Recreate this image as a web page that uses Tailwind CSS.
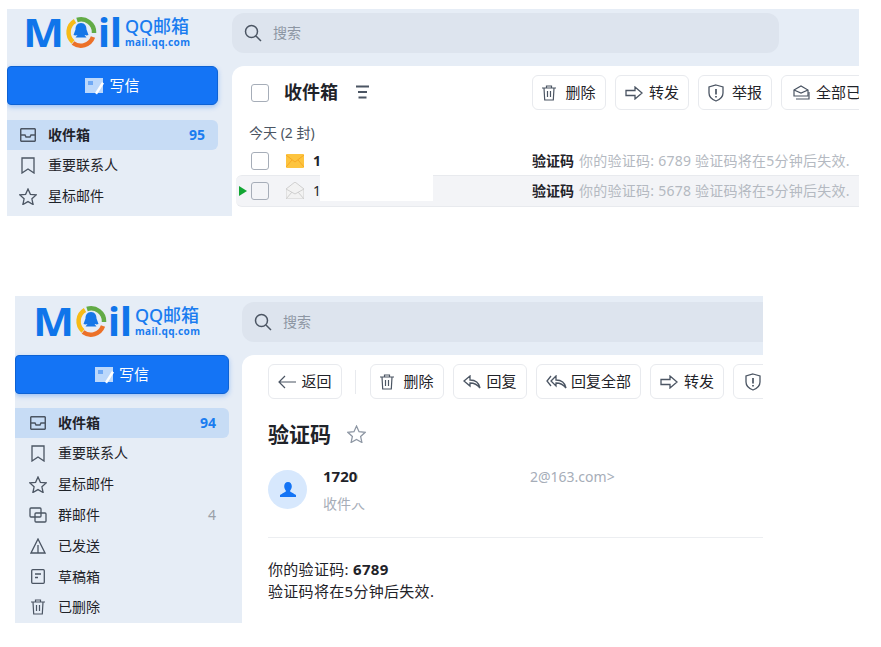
<!DOCTYPE html>
<html lang="zh-CN">
<head>
  <meta charset="UTF-8" />
  <title>QQ邮箱</title>
  <script src="https://cdn.jsdelivr.net/npm/@tailwindcss/browser@4"></script>
</head>
<body class="bg-white w-[881px] h-[647px] overflow-hidden text-[#1f2329] text-sm font-['Noto_Sans','Noto_Sans_CJK_SC',sans-serif]">

  <!-- list view -->
  <div class="ml-[7px] mt-[9px] w-[852px] h-[207px] bg-[#e6edf6] overflow-hidden">
    <div class="h-[57px] flex items-start">
      <div class="w-[225px] h-[57px] shrink-0 pl-[16px] flex items-start">
        <div class="flex items-center text-[#0f75ea] text-[40px] font-bold leading-[46px] h-[46px]">
          <span class="inline-block w-[39px] origin-left scale-x-[1.09]">M</span>
          <svg class="w-[32px] h-[32px] ml-[3px]" viewBox="0 0 32 32" fill="none">
            <path d="M8 26A13 13 0 0 1 10 5" stroke="#f7bb16" stroke-width="4.5"/>
            <path d="M12 4A13 13 0 0 1 29 17" stroke="#62ab46" stroke-width="4.5"/>
            <path d="M28 21A13 13 0 0 1 8 27" stroke="#ec7128" stroke-width="4.5"/>
            <path d="M16 7c4 0 5.500 3 5.500 6.500l2 5.500c-2 1-4 0-4 0l2 2.500H10.500l2-2.500s-2 1-4 0l2-5.500C10.500 10 12 7 16 7z" fill="#1577e8"/>
          </svg>
          <span class="ml-[1px]">il</span>
        </div>
        <div class="ml-[3px] mt-[7px] text-[#1a7cf0]">
          <div class="text-[18px] leading-[20px] font-medium whitespace-nowrap">QQ邮箱</div>
          <div class="text-[10px] leading-[12px] font-bold tracking-[0.4px]">mail.qq.com</div>
        </div>
      </div>
      <div class="mt-[4px] w-[547px] h-[40px] rounded-xl bg-[#dde4ee] flex items-center pl-[12px] text-[#8d96a3]">
        <svg class="w-[18px] h-[18px]" viewBox="0 0 18 18" fill="none" stroke="#4b5563" stroke-width="1.5"><circle cx="7.5" cy="7.5" r="6"/><path d="M12 12l5 5"/></svg>
        <span class="ml-[11px]">搜索</span>
      </div>
    </div>
    <div class="flex h-[150px]">
      <div class="w-[225px] shrink-0">
        <div class="w-[211px] h-[39px] rounded-r-md rounded-l-sm bg-[#1474f5] border border-[#0d62d4] shadow-[0_2px_5px_rgba(20,116,245,0.35)] flex items-center justify-center text-white text-[15px]">
          <svg class="w-[20px] h-[18px] mr-[4px]" viewBox="0 0 20 18"><rect x="0" y="1" width="18" height="15" fill="#bcd8fb"/><rect x="3" y="4" width="5" height="4" fill="#6fa9f5"/><path d="M10 16l7-11 2 1.500-7 11z" fill="#fff"/></svg>
          <span>写信</span>
        </div>
        <div class="mt-[15px] w-[211px]">
          <div class="h-[30px] rounded-r-md bg-[#c7dcf5] flex items-center pl-[13px] pr-[13px] font-bold">
            <svg class="w-[16px] h-[14px] mr-[12px] shrink-0" viewBox="0 0 16 14" fill="none" stroke="#4b5563" stroke-width="1.500"><rect x="0.700" y="0.700" width="14.600" height="12.600" rx="1"/><path d="M1 7h4l1 2h4l1-2h4"/></svg>
            <span>收件箱</span>
            <span class="ml-auto text-[#1a7cf0]">95</span>
          </div>
          <div class="h-[30.8px] flex items-center pl-[13px]">
            <svg class="w-[16px] h-[17px] mr-[12px] shrink-0" viewBox="0 0 16 17" fill="none" stroke="#4b5563" stroke-width="1.300"><path d="M2 1h12v15l-6-4-6 4z"/></svg>
            <span>重要联系人</span>
          </div>
          <div class="h-[30.8px] flex items-center pl-[12px]">
            <svg class="w-[18px] h-[17px] mr-[11px] shrink-0" viewBox="0 0 18 17" fill="none" stroke="#4b5563" stroke-width="1.300"><path d="M9 1l2.400 5.300 5.800.6-4.300 3.900 1.200 5.700L9 13.600l-5.100 2.900 1.200-5.700L.8 6.900l5.800-.6z"/></svg>
            <span>星标邮件</span>
          </div>
        </div>
      </div>
      <div class="relative w-[627px] shrink-0 bg-white rounded-tl-xl overflow-hidden">
        <div class="flex items-center h-[44px] pt-[9px]">
          <div class="w-[300px] shrink-0 flex items-center pl-[19px]">
            <span class="w-[18px] h-[18px] rounded-[3px] border border-[#a6adb8] bg-white"></span>
            <span class="ml-[15px] text-[18px] font-bold leading-none -mt-[2px]">收件箱</span>
            <svg class="ml-[18px] w-[13px] h-[14px] -mt-[1px]" viewBox="0 0 13 14" stroke="#4b5563" stroke-width="2"><path d="M0 1.500h13M2 7h9M2.500 12.500h8"/></svg>
          </div>
          <div class="flex gap-[9px] shrink-0 text-[15px]">
            <div class="w-[74px] h-[35px] rounded-md border border-[#e8eaee] flex items-center justify-center">
              <svg class="w-[14px] h-[16px] mr-[9px]" viewBox="0 0 14 16" fill="none" stroke="#4b5563" stroke-width="1.200"><path d="M0 3h14M4.500 3V1h5v2M2 3l.7 12h8.600L12 3M5.500 6v6M8.500 6v6"/></svg>
              <span>删除</span>
            </div>
            <div class="w-[74px] h-[35px] rounded-md border border-[#e8eaee] flex items-center justify-center">
              <svg class="w-[18px] h-[14px] mr-[6px]" viewBox="0 0 18 14" fill="none" stroke="#4b5563" stroke-width="1.300"><path d="M1 4.500h9V1l7 6-7 6V9.500H1z"/></svg>
              <span>转发</span>
            </div>
            <div class="w-[74px] h-[35px] rounded-md border border-[#e8eaee] flex items-center justify-center">
              <svg class="w-[16px] h-[18px] mr-[8px]" viewBox="0 0 16 18" fill="none" stroke="#4b5563" stroke-width="1.300"><path d="M8 1l7 2v6c0 4-3 6.500-7 8-4-1.500-7-4-7-8V3z"/><path d="M8 5v5.500M8 12v1.500" stroke-width="1.700"/></svg>
              <span>举报</span>
            </div>
            <div class="w-[110px] h-[35px] rounded-md border border-[#e8eaee] flex items-center pl-[11px] whitespace-nowrap">
              <svg class="w-[17px] h-[15px] mr-[6px]" viewBox="0 0 17 15" fill="none" stroke="#4b5563" stroke-width="1.200"><path d="M1 5l7-4 7 4v6H1z"/><path d="M1 5l7 3 7-3M3 14h13V7"/></svg>
              <span>全部已读</span>
            </div>
          </div>
        </div>
        <div class="mt-[10px] h-[26px] pl-[17px] flex items-center text-[14px] text-[#4b5563]">今天 (2 封)</div>
        <div class="flex items-center h-[29px]">
          <div class="w-[300px] shrink-0 flex items-center pl-[19px] font-bold">
            <span class="w-[18px] h-[18px] rounded-[3px] border border-[#a6adb8] bg-white"></span>
            <svg class="ml-[17px] w-[18px] h-[14px]" viewBox="0 0 18 14"><rect width="18" height="14" rx="1" fill="#fdc43f"/><path d="M0 1l9 7 9-7M0 13l6-7M18 13l-6-7" fill="none" stroke="#f7a823"/></svg>
            <span class="ml-[9px]">1</span>
          </div>
          <span class="font-bold">验证码</span>
          <span class="ml-[5px] text-[#b4b9c1] whitespace-nowrap tracking-[0.25px]">你的验证码: 6789 验证码将在5分钟后失效.</span>
        </div>
        <div class="flex items-center h-[32px] pb-[1px] ml-[4px] bg-[#f3f4f7] border-y border-[#e8eaee] rounded-l-md">
          <div class="w-[296px] shrink-0 flex items-center pl-[3px]">
            <span class="w-0 h-0 border-y-[5px] border-y-transparent border-l-[8px] border-l-[#12a633]"></span>
            <span class="ml-[4px] w-[18px] h-[18px] rounded-[3px] border border-[#a6adb8]"></span>
            <svg class="ml-[17px] w-[18px] h-[17px]" viewBox="0 0 18 17"><path d="M0 7l9-7 9 7v10H0z" fill="#f2f2f2" stroke="#cfcfcf"/><path d="M0 7l9 5 9-5M0 17l6-7M18 17l-6-7" fill="none" stroke="#cfcfcf"/></svg>
            <span class="ml-[9px]">1</span>
          </div>
          <span class="font-bold">验证码</span>
          <span class="ml-[5px] text-[#b4b9c1] whitespace-nowrap tracking-[0.25px]">你的验证码: 5678 验证码将在5分钟后失效.</span>
        </div>
        <div class="absolute left-[88px] top-[109px] w-[113px] h-[26px] bg-white"></div>
      </div>
    </div>
  </div>

  <!-- reading view -->
  <div class="ml-[15px] mt-[80px] w-[748px] h-[327px] bg-[#e6edf6] overflow-hidden">
    <div class="h-[59px] flex items-start">
      <div class="w-[227px] h-[59px] shrink-0 pl-[18px] pt-[2px] flex items-start">
        <div class="flex items-center text-[#0f75ea] text-[40px] font-bold leading-[46px] h-[46px]">
          <span class="inline-block w-[39px] origin-left scale-x-[1.09]">M</span>
          <svg class="w-[32px] h-[32px] ml-[3px]" viewBox="0 0 32 32" fill="none">
            <path d="M8 26A13 13 0 0 1 10 5" stroke="#f7bb16" stroke-width="4.5"/>
            <path d="M12 4A13 13 0 0 1 29 17" stroke="#62ab46" stroke-width="4.5"/>
            <path d="M28 21A13 13 0 0 1 8 27" stroke="#ec7128" stroke-width="4.5"/>
            <path d="M16 7c4 0 5.500 3 5.500 6.500l2 5.500c-2 1-4 0-4 0l2 2.500H10.500l2-2.500s-2 1-4 0l2-5.500C10.500 10 12 7 16 7z" fill="#1577e8"/>
          </svg>
          <span class="ml-[1px]">il</span>
        </div>
        <div class="ml-[3px] mt-[7px] text-[#1a7cf0]">
          <div class="text-[18px] leading-[20px] font-medium whitespace-nowrap">QQ邮箱</div>
          <div class="text-[10px] leading-[12px] font-bold tracking-[0.4px]">mail.qq.com</div>
        </div>
      </div>
      <div class="mt-[6px] w-[547px] h-[40px] rounded-xl bg-[#dde4ee] flex items-center pl-[12px] text-[#8d96a3] shrink-0">
        <svg class="w-[18px] h-[18px]" viewBox="0 0 18 18" fill="none" stroke="#4b5563" stroke-width="1.5"><circle cx="7.5" cy="7.5" r="6"/><path d="M12 12l5 5"/></svg>
        <span class="ml-[11px]">搜索</span>
      </div>
    </div>
    <div class="flex h-[268px]">
      <div class="w-[227px] shrink-0">
        <div class="w-[214px] h-[39px] rounded-r-md rounded-l-sm bg-[#1474f5] border border-[#0d62d4] shadow-[0_2px_5px_rgba(20,116,245,0.35)] flex items-center justify-center text-white text-[15px]">
          <svg class="w-[20px] h-[18px] mr-[4px]" viewBox="0 0 20 18"><rect x="0" y="1" width="18" height="15" fill="#bcd8fb"/><rect x="3" y="4" width="5" height="4" fill="#6fa9f5"/><path d="M10 16l7-11 2 1.500-7 11z" fill="#fff"/></svg>
          <span>写信</span>
        </div>
        <div class="mt-[14px] w-[214px]">
          <div class="h-[30px] rounded-r-md bg-[#c7dcf5] flex items-center pl-[15px] pr-[13px] font-bold">
            <svg class="w-[16px] h-[14px] mr-[12px] shrink-0" viewBox="0 0 16 14" fill="none" stroke="#4b5563" stroke-width="1.500"><rect x="0.700" y="0.700" width="14.600" height="12.600" rx="1"/><path d="M1 7h4l1 2h4l1-2h4"/></svg>
            <span>收件箱</span>
            <span class="ml-auto text-[#1a7cf0]">94</span>
          </div>
          <div class="h-[30.8px] flex items-center pl-[15px]">
            <svg class="w-[16px] h-[17px] mr-[12px] shrink-0" viewBox="0 0 16 17" fill="none" stroke="#4b5563" stroke-width="1.300"><path d="M2 1h12v15l-6-4-6 4z"/></svg>
            <span>重要联系人</span>
          </div>
          <div class="h-[30.8px] flex items-center pl-[14px]">
            <svg class="w-[18px] h-[17px] mr-[11px] shrink-0" viewBox="0 0 18 17" fill="none" stroke="#4b5563" stroke-width="1.300"><path d="M9 1l2.400 5.300 5.800.6-4.300 3.900 1.200 5.700L9 13.600l-5.100 2.900 1.200-5.700L.8 6.900l5.800-.6z"/></svg>
            <span>星标邮件</span>
          </div>
          <div class="h-[30.8px] flex items-center pl-[14px] pr-[13px]">
            <svg class="w-[18px] h-[16px] mr-[11px] shrink-0" viewBox="0 0 18 16" fill="none" stroke="#4b5563" stroke-width="1.300"><rect x="1" y="1" width="11" height="9" rx="1"/><rect x="6" y="6" width="11" height="9" rx="1"/></svg>
            <span>群邮件</span>
            <span class="ml-auto text-[14px] text-[#9aa0a8]">4</span>
          </div>
          <div class="h-[30.8px] flex items-center pl-[15px]">
            <svg class="w-[16px] h-[16px] mr-[12px] shrink-0" viewBox="0 0 16 16" fill="none" stroke="#4b5563" stroke-width="1.300"><path d="M8 1l7 14H1zM8 7v8"/></svg>
            <span>已发送</span>
          </div>
          <div class="h-[30.8px] flex items-center pl-[16px]">
            <svg class="w-[14px] h-[15px] mr-[13px] shrink-0" viewBox="0 0 14 15" fill="none" stroke="#4b5563" stroke-width="1.300"><rect x="0.700" y="0.700" width="12.600" height="13.600" rx="1"/><path d="M4 5h6M4 8.500h3"/></svg>
            <span>草稿箱</span>
          </div>
          <div class="h-[30.8px] flex items-center pl-[16px]">
            <svg class="w-[14px] h-[16px] mr-[13px] shrink-0" viewBox="0 0 14 16" fill="none" stroke="#4b5563" stroke-width="1.200"><path d="M0 3h14M4.500 3V1h5v2M2 3l.7 12h8.600L12 3M5.500 6v6M8.500 6v6"/></svg>
            <span>已删除</span>
          </div>
        </div>
      </div>
      <div class="w-[521px] shrink-0 bg-white rounded-tl-xl overflow-hidden pl-[26px]">
        <div class="flex items-center gap-[9px] pt-[9px] w-[600px] text-[15px]">
          <div class="w-[74px] h-[35px] rounded-md border border-[#e8eaee] flex items-center justify-center">
            <svg class="w-[18px] h-[14px] mr-[5px]" viewBox="0 0 18 14" fill="none" stroke="#4b5563" stroke-width="1.200"><path d="M7 1L1 7l6 6M1 7h17"/></svg>
            <span>返回</span>
          </div>
          <span class="w-px h-[24px] bg-[#e8eaee] ml-[4px] mr-[5px]"></span>
          <div class="w-[74px] h-[35px] rounded-md border border-[#e8eaee] flex items-center justify-center">
            <svg class="w-[14px] h-[16px] mr-[9px]" viewBox="0 0 14 16" fill="none" stroke="#4b5563" stroke-width="1.200"><path d="M0 3h14M4.500 3V1h5v2M2 3l.7 12h8.600L12 3M5.500 6v6M8.500 6v6"/></svg>
            <span>删除</span>
          </div>
          <div class="w-[74px] h-[35px] rounded-md border border-[#e8eaee] flex items-center justify-center">
            <svg class="w-[18px] h-[14px] mr-[5px]" viewBox="0 0 18 14" fill="none" stroke="#4b5563" stroke-width="1.300"><path d="M7 1L1 6l6 5V8c4 0 7 1 10 5-1-5-4-8-10-8z"/></svg>
            <span>回复</span>
          </div>
          <div class="w-[105px] h-[35px] rounded-md border border-[#e8eaee] flex items-center justify-center">
            <svg class="w-[21px] h-[14px] mr-[4px]" viewBox="0 0 21 14" fill="none" stroke="#4b5563" stroke-width="1.300"><path d="M5 1L1 6l4 5M10 1L5 6l5 5V8c4 0 7 1 10 5-1-5-4-8-10-8z"/></svg>
            <span>回复全部</span>
          </div>
          <div class="w-[74px] h-[35px] rounded-md border border-[#e8eaee] flex items-center justify-center">
            <svg class="w-[18px] h-[14px] mr-[6px]" viewBox="0 0 18 14" fill="none" stroke="#4b5563" stroke-width="1.300"><path d="M1 4.500h9V1l7 6-7 6V9.500H1z"/></svg>
            <span>转发</span>
          </div>
          <div class="w-[74px] h-[35px] rounded-md border border-[#e8eaee] flex items-center pl-[11px]">
            <svg class="w-[16px] h-[18px]" viewBox="0 0 16 18" fill="none" stroke="#4b5563" stroke-width="1.300"><path d="M8 1l7 2v6c0 4-3 6.500-7 8-4-1.500-7-4-7-8V3z"/><path d="M8 5v5.500M8 12v1.500" stroke-width="1.700"/></svg>
          </div>
        </div>
        <div class="mt-[20px] flex items-center h-[30px]">
          <span class="text-[21px] font-bold">验证码</span>
          <svg class="ml-[16px] w-[19px] h-[18px]" viewBox="0 0 18 17" fill="none" stroke="#8d96a3" stroke-width="1.200"><path d="M9 1l2.400 5.300 5.800.6-4.300 3.900 1.200 5.700L9 13.600l-5.100 2.900 1.200-5.700L.8 6.900l5.800-.6z"/></svg>
        </div>
        <div class="mt-[21px] flex items-start">
          <div class="w-[39px] h-[39px] rounded-full bg-[#d7e8fd] flex items-center justify-center">
            <svg class="w-[16px] h-[16px]" viewBox="0 0 16 16" fill="#1474f5"><path d="M8 0c2.500 0 3.800 2 3.800 4.300S10.700 8 10 9c0 1 4 2.500 6 4v2H0v-2c2-1.500 6-3 6-4-.7-1-1.800-2.400-1.800-4.700S5.500 0 8 0z"/></svg>
          </div>
          <div class="ml-[16px] -mt-[5px] w-[440px]">
            <div class="h-[24px] flex items-center">
              <span class="w-[35px] overflow-hidden text-[15px] font-bold whitespace-nowrap">17200</span>
              <span class="ml-[172px] w-[90px] overflow-hidden text-[14px] text-[#a6adb8] whitespace-nowrap">2@163.com&gt;</span>
            </div>
            <div class="relative mt-[5px] w-[43px] h-[20px] text-[14px] text-[#a6adb8] leading-[20px] overflow-hidden whitespace-nowrap">收件人<span class="absolute right-0 top-[2px] w-[11px] h-[7px] bg-white"></span></div>
          </div>
        </div>
        <div class="mt-[23px] h-px bg-[#eceef1] w-[500px]"></div>
        <div class="mt-[20px] text-[15px] tracking-[0.3px] leading-[22px] text-[#1f2329]">
          <div>你的验证码: <b>6789</b></div>
          <div>验证码将在5分钟后失效.</div>
        </div>
      </div>
    </div>
  </div>
</body>
</html>
